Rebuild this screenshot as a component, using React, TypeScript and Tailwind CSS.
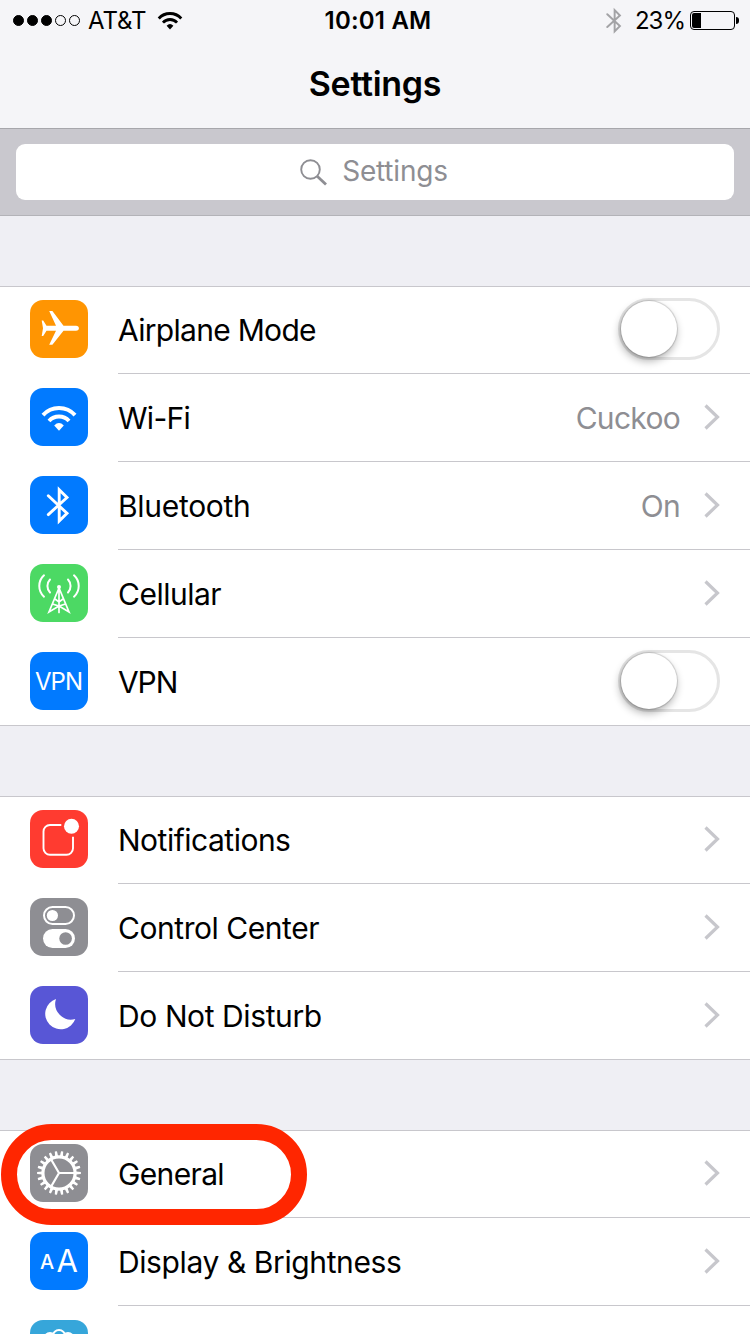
import type { ReactNode } from "react";

interface SettingItem {
    label?: string;
    tracking?: string;
    color: string;
    icon: ReactNode;
    value?: string;
    isToggle?: boolean;
}

const WifiArcs = () => (
    <>
        <path d="M13 27.2a21.5 21.5 0 0 1 32 0" fill="none" stroke="currentColor" strokeWidth="4" />
        <path d="M19 33a13.6 13.6 0 0 1 20 0" fill="none" stroke="currentColor" strokeWidth="4" />
        <path d="M24.2 37.4Q29 32.6 33.8 37.4L29 42.7Z" fill="currentColor" />
    </>
)

const AirplaneIcon = () => (
    <path
        d="M19.2 11h3.2L33.5 25.8H46c1.9 0 2.9 1.2 2.9 2.5S47.9 30.8 46 30.8H33.5L22.4 44.7H19.2L26 30.8H16.5L13.2 36H11.7L13 28.3 11.7 20.5H13.2L16.5 25.8H26Z"
        fill="currentColor"
    />
)

const BluetoothRune = () => (
    <path
        d="M18.3 19.8L37 37.3 29.2 45V13.7L37 21.5 18.3 38.6"
        fill="none"
        stroke="currentColor"
        strokeWidth="2.9"
        strokeLinecap="round"
    />
)

const CellularIcon = () => (
    <g fill="none" stroke="currentColor" strokeWidth="2" strokeLinecap="round">
        <path d="M14 11.3A14.5 14.5 0 0 0 14 32.7" />
        <path d="M20 15.5A9.5 9.5 0 0 0 20 28.5" />
        <path d="M44 11.3A14.5 14.5 0 0 1 44 32.7" />
        <path d="M38 15.5A9.5 9.5 0 0 1 38 28.5" />
        <path d="M29 23V48.5M29 24L19 48 29 42 39 48ZM25 35L29 38 33 35M22.5 40L29 42 35.5 40" strokeWidth="1.7" />
        <circle cx="29" cy="23" r="2" fill="currentColor" stroke="none" />
    </g>
)

const NotificationsIcon = () => (
    <>
        <path
            d="M31.3 15H20a6.5 6.5 0 0 0-6.5 6.5V38.3a6.5 6.5 0 0 0 6.5 6.5H36.5a6.5 6.5 0 0 0 6.5-6.5V26.7"
            fill="none"
            stroke="currentColor"
            strokeWidth="1.9"
        />
        <circle cx="41.5" cy="16.2" r="7.5" fill="currentColor" />
    </>
)

const ControlCenterIcon = () => (
    <>
        <rect x="14" y="9" width="30" height="17" rx="8.5" fill="none" stroke="currentColor" strokeWidth="2" />
        <circle cx="22.4" cy="17.5" r="5.6" fill="currentColor" />
        <rect x="13" y="31" width="32" height="19" rx="9.5" fill="currentColor" />
        <circle cx="35.6" cy="40.5" r="6.3" fill="#8e8e93" />
    </>
)

const MoonIcon = () => (
    <path d="M26 13A15.5 15.5 0 1 0 45.3 33A15.8 15.8 0 0 1 26 13Z" fill="currentColor" />
)

const teeth = Array.from({ length: 22 }, (_, index) => (index * 360) / 22)

const GearIcon = () => (
    <g stroke="currentColor" fill="none">
        <circle cx="29" cy="29" r="16.1" strokeWidth="3.2" />
        {teeth.map((angle) => (
            <path
                key={angle}
                d="M46 27.5L50.9 27.9V30.1L46 30.5Z"
                fill="currentColor"
                stroke="none"
                transform={`rotate(${angle} 29 29)`}
            />
        ))}
        <path d="M29 29H45M29 29L21 15.2M29 29L21 42.8" strokeWidth="2.2" />
    </g>
)

const WallpaperIcon = () => (
    <g fill="none" stroke="currentColor" strokeWidth="1.8">
        <circle cx="29" cy="16" r="6" />
        <circle cx="20" cy="19" r="6" />
        <circle cx="38" cy="19" r="6" />
    </g>
)

const groups: SettingItem[][] = [
    [
        { label: "Airplane Mode", tracking: "tracking-[-0.7px]", color: "bg-[#ff9502]", icon: <AirplaneIcon />, isToggle: true },
        { label: "Wi-Fi", tracking: "tracking-[-0.7px]", color: "bg-[#017aff]", icon: <WifiArcs />, value: "Cuckoo" },
        { label: "Bluetooth", tracking: "tracking-[-0.3px]", color: "bg-[#017aff]", icon: <BluetoothRune />, value: "On" },
        { label: "Cellular", color: "bg-[#4cd964]", icon: <CellularIcon /> },
        {
            label: "VPN",
            tracking: "tracking-[-1.1px]",
            color: "bg-[#017aff]",
            icon: <text x="29" y="37.8" textAnchor="middle" fontSize="24" textLength="48" fill="currentColor">VPN</text>,
            isToggle: true,
        },
    ],
    [
        { label: "Notifications", color: "bg-[#ff3b30]", icon: <NotificationsIcon /> },
        { label: "Control Center", tracking: "tracking-[-0.45px]", color: "bg-[#8e8e93]", icon: <ControlCenterIcon /> },
        { label: "Do Not Disturb", tracking: "tracking-[-0.4px]", color: "bg-[#5856d6]", icon: <MoonIcon /> },
    ],
    [
        { label: "General", tracking: "tracking-[-0.65px]", color: "bg-[#8e8e93]", icon: <GearIcon /> },
        {
            label: "Display & Brightness",
            tracking: "tracking-[-0.4px]",
            color: "bg-[#017aff]",
            icon: (
                <g fill="currentColor">
                    <text x="10" y="37.3" fontSize="20" fontWeight="500">A</text>
                    <text x="26.5" y="39.8" fontSize="31">A</text>
                </g>
            ),
        },
        { color: "bg-[#36a6da]", icon: <WallpaperIcon /> },
    ],
]

const Toggle = () => (
    <div className="h-[62px] w-[102px] rounded-full border-3 border-[#e5e5e5] bg-white">
        <div className="size-14 rounded-full bg-white shadow-[0_0_1px_1px_rgba(0,0,0,0.15),-1px_4px_8px_rgba(0,0,0,0.32)]" />
    </div>
)

const Chevron = () => (
    <svg className="h-[58px] w-4" viewBox="0 0 16 58" fill="none" stroke="#c7c7cc" strokeWidth="3.2">
        <path d="M1.5 17.5L13.5 29 1.5 40.5" />
    </svg>
)

const Row = ({ item, isLast }: { item: SettingItem; isLast: boolean }) => (
    <div className="flex h-[88px] pl-[30px]">
        <div className={`mt-3.5 size-[58px] shrink-0 overflow-hidden rounded-[13px] text-white ${item.color}`}>
            <svg className="size-full" viewBox="0 0 58 58">{item.icon}</svg>
        </div>
        <div className={`ml-[30px] flex flex-1 items-center border-b pr-[30px] ${isLast ? 'border-transparent' : 'border-[#c8c7cc]'}`}>
            <span className={`mt-[2px] flex-1 whitespace-nowrap text-[30px] ${item.tracking ?? 'tracking-[-0.5px]'}`}>{item.label}</span>
            {item.isToggle && <div className="-mt-0.5"><Toggle /></div>}
            {item.value && <span className="mr-6 mt-[2px] text-[30px] tracking-[-0.7px] text-[#8e8e93]">{item.value}</span>}
            {!item.isToggle && <div className="-mt-0.5"><Chevron /></div>}
        </div>
    </div>
)

const StatusBar = () => (
    <div className="grid h-[42px] grid-cols-3 items-center pl-[13px] pr-[11px] text-[24px]">
        <div className="flex items-center">
            <div className="-mt-0.5 flex gap-[3px]">
                {[true, true, true, false, false].map((filled, index) => (
                    <span key={index} className={`size-[11px] rounded-full border border-black ${filled ? 'bg-black' : ''}`} />
                ))}
            </div>
            <span className="ml-2 tracking-[-0.1px]">AT&amp;T</span>
            <svg className="-mt-0.5 ml-[11px] h-[19px] w-[26px]" viewBox="11 16.5 36 27"><WifiArcs /></svg>
        </div>
        <div className="pl-1 text-center font-semibold tracking-[0.2px]">10:01 AM</div>
        <div className="flex items-center justify-end">
            <svg className="-mt-0.5 h-[27px] w-4 text-[#a3a3a6]" viewBox="17 9 22.5 40"><BluetoothRune /></svg>
            <span className="ml-[13px] tracking-[-1px]">23%</span>
            <div className="-mt-0.5 ml-[5px] h-[19px] w-[45px] rounded-[4px] border border-black p-px">
                <div className="h-full w-[9px] rounded-l-[2px] bg-black" />
            </div>
            <div className="-mt-0.5 ml-px h-[7px] w-[3px] rounded-r-full bg-black" />
        </div>
    </div>
)

const App = () => {
    return (
        <main className="relative h-[1334px] w-[750px] overflow-hidden bg-[#efeff4] font-['Inter',sans-serif] text-black">
            <header className="h-[129px] border-b border-[#a7a7ac] bg-[#f5f5f8]">
                <StatusBar />
                <h1 className="mt-[17px] text-center text-[34px] font-semibold leading-[50px] tracking-[-0.3px]">Settings</h1>
            </header>
            <div className="h-[87px] border-b border-[#b3b3b8] bg-[#c9c8ce] px-4 pt-[15px]">
                <div className="flex h-14 items-center justify-center gap-[15px] rounded-[9px] bg-white pr-0.5 text-[#8e8e93]">
                    <svg className="size-[27px]" viewBox="0 0 27 27" fill="none" stroke="currentColor">
                        <circle cx="10.5" cy="10.5" r="9.3" strokeWidth="1.9" />
                        <path d="M17.2 17.2L26 25.5" strokeWidth="2.8" />
                    </svg>
                    <span className="-mt-0.5 text-[28px] tracking-[-0.2px]">Settings</span>
                </div>
            </div>
            <div className="flex flex-col gap-[70px] pt-[70px]">
                {groups.map((items, groupIndex) => (
                    <section key={groupIndex} className="bg-white shadow-[inset_0_1px_#c8c7cc,inset_0_-1px_#c8c7cc]">
                        {items.map((item, index) => (
                            <Row key={index} item={item} isLast={index === items.length - 1} />
                        ))}
                    </section>
                ))}
            </div>
            <div className="absolute left-px top-[1124px] h-[101px] w-[306px] rounded-full border-16 border-[#ff2600]" />
        </main>
    );
}

export default App;
